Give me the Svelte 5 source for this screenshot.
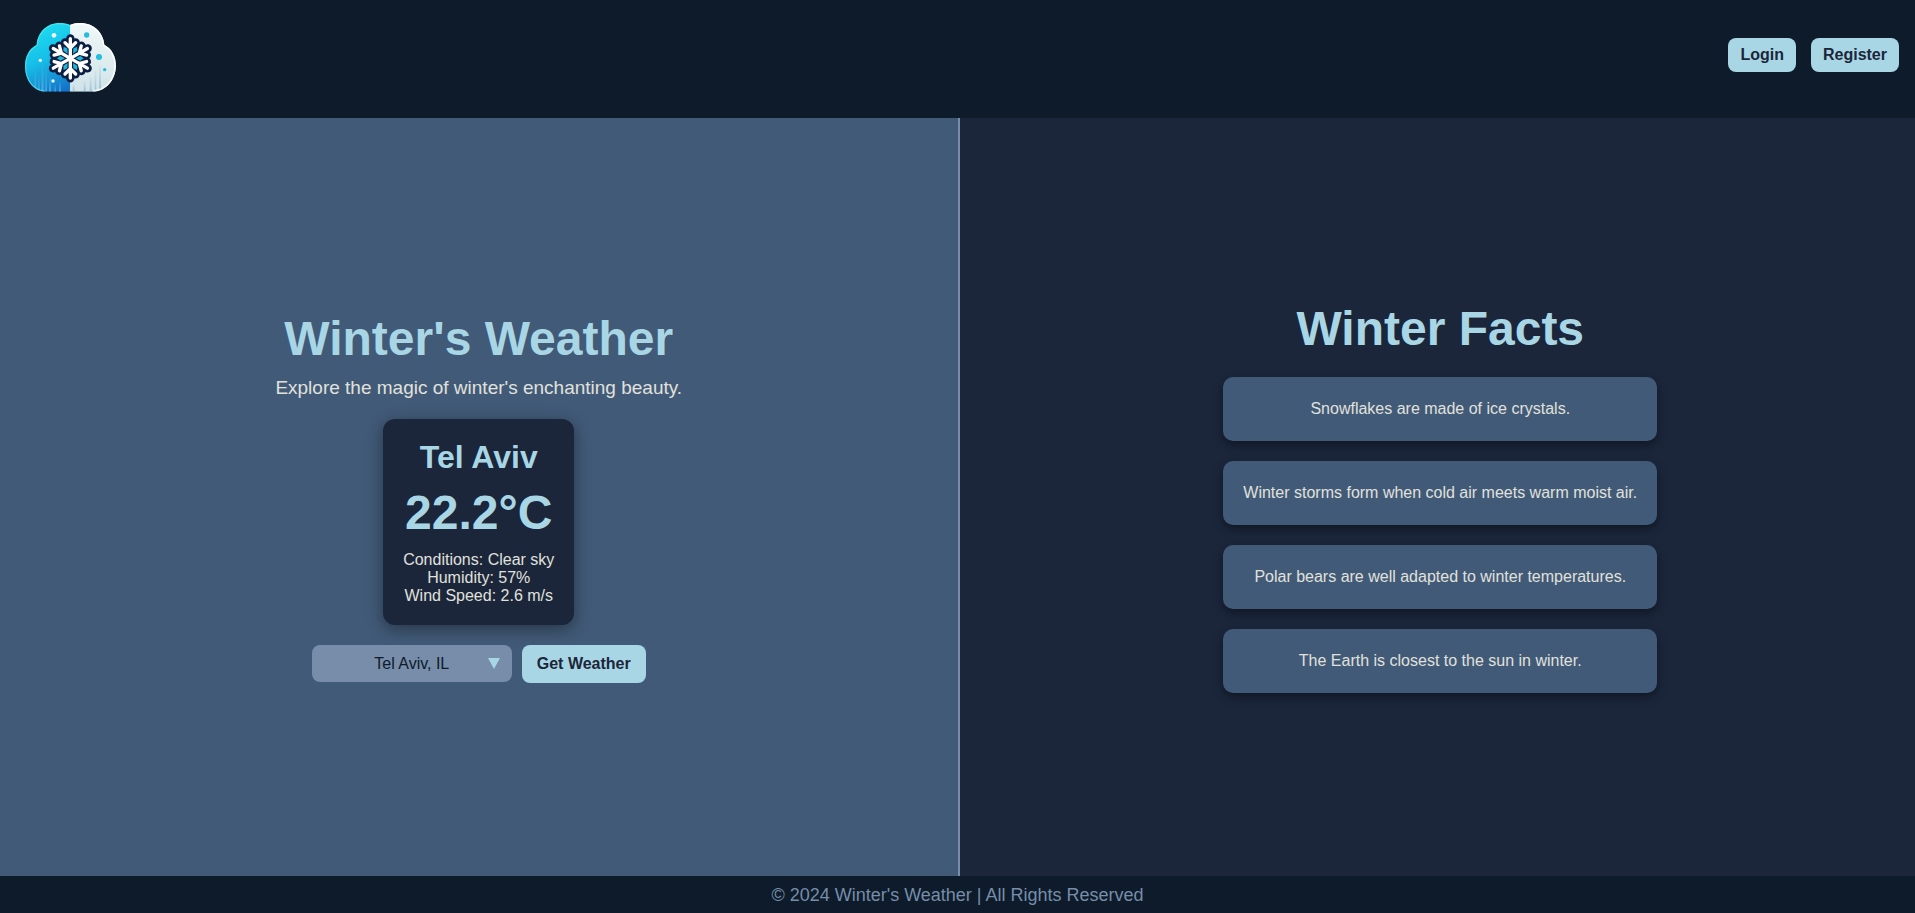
<script>
  const facts = [
    'Snowflakes are made of ice crystals.',
    'Winter storms form when cold air meets warm moist air.',
    'Polar bears are well adapted to winter temperatures.',
    'The Earth is closest to the sun in winter.'
  ];
  const cities = ['Tel Aviv, IL', 'London, GB', 'New York, US', 'Tokyo, JP'];
  const arms = [0, 60, 120, 180, 240, 300];
  let city = $state(cities[0]);
</script>

<div class="page">
  <header>
    <a class="logo" href="#home" aria-label="Home">
      <svg viewBox="30 -15 300 300" aria-hidden="true">
        <defs>
          <linearGradient id="cold" x1="0.4" y1="0" x2="0.7" y2="1">
            <stop offset="0" stop-color="#20e0f0" />
            <stop offset="0.5" stop-color="#16bfe8" />
            <stop offset="1" stop-color="#1474c8" />
          </linearGradient>
          <linearGradient id="pale" x1="0" y1="0" x2="0" y2="1">
            <stop offset="0" stop-color="#f2f8f8" />
            <stop offset="0.65" stop-color="#dcebed" />
            <stop offset="1" stop-color="#cfe2e9" />
          </linearGradient>
          <linearGradient id="drip" x1="0" y1="0" x2="0" y2="1">
            <stop offset="0" stop-color="#5cc0ec" stop-opacity="0" />
            <stop offset="1" stop-color="#6cc6ee" stop-opacity="0.6" />
          </linearGradient>
          <linearGradient id="shade" x1="0" y1="0" x2="0" y2="1">
            <stop offset="0" stop-color="#8fbdd2" stop-opacity="0.1" />
            <stop offset="1" stop-color="#7fb2cb" stop-opacity="0.7" />
          </linearGradient>
          <clipPath id="cloud">
            <path d="M105 245C70 243 45 212 45 168C45 138 58 116 80 104C83 66 112 39 148 39C160 39 171 41 180 45C190 40 202 39 212 39C249 39 280 66 283 104C305 116 318 138 318 168C316 212 288 243 250 245Z" />
          </clipPath>
        </defs>
        <g clip-path="url(#cloud)">
          <rect x="40" y="30" width="140" height="220" fill="url(#cold)" />
          <rect x="180" y="30" width="145" height="220" fill="url(#pale)" />
          <g fill="url(#drip)">
            <rect x="73" y="175" width="6" height="70" />
            <rect x="84" y="190" width="5" height="55" />
            <rect x="94" y="155" width="7" height="90" />
            <rect x="106" y="170" width="5" height="75" />
            <rect x="117" y="195" width="6" height="50" />
            <rect x="133" y="222" width="5" height="23" />
            <rect x="147" y="212" width="6" height="33" />
          </g>
          <g fill="url(#shade)">
            <rect x="188" y="222" width="6" height="23" />
            <rect x="221" y="212" width="6" height="33" />
            <rect x="239" y="200" width="6" height="45" />
            <rect x="254" y="182" width="5" height="63" />
            <rect x="267" y="165" width="6" height="80" />
          </g>
          <path d="M105 245C70 243 45 212 45 168C45 138 58 116 80 104C83 66 112 39 148 39C160 39 171 41 180 45" fill="none" stroke="#5cecf5" stroke-width="7" opacity="0.6" />
          <path d="M180 45C190 40 202 39 212 39C249 39 280 66 283 104C305 116 318 138 318 168C316 212 288 243 250 245" fill="none" stroke="#fff" stroke-width="10" opacity="0.8" />
        </g>
        <g fill="#effcff">
          <circle cx="132" cy="76" r="7" />
          <circle cx="91" cy="151" r="5" />
          <circle cx="129" cy="213" r="5" />
        </g>
        <g fill="#24bce0">
          <circle cx="230" cy="75" r="8" />
          <circle cx="267" cy="141" r="9" />
          <circle cx="284" cy="179" r="5" />
        </g>
        <g fill="none" stroke="#0d1e43" stroke-width="25" stroke-linecap="round" stroke-linejoin="round">
          {#each arms as angle}
            <path d="M181 145V85M165 97L181 113L197 97" transform="rotate({angle} 181 145)" />
          {/each}
        </g>
        <circle cx="181" cy="145" r="42" fill="#0d1e43" />
        <g fill="#22b4d6">
          {#each arms as angle}
            <path d="M181 129L188 115L181 105L174 115Z" transform="rotate({angle + 30} 181 145)" />
          {/each}
        </g>
        <g fill="none" stroke="#fff" stroke-width="10" stroke-linecap="round" stroke-linejoin="round">
          {#each arms as angle}
            <path d="M181 145V86M165 98L181 114L197 98" transform="rotate({angle} 181 145)" />
          {/each}
        </g>
      </svg>
    </a>
    <nav>
      <button type="button">Login</button>
      <button type="button">Register</button>
    </nav>
  </header>

  <main>
    <section class="weather">
      <h1>Winter's Weather</h1>
      <p class="tagline">Explore the magic of winter's enchanting beauty.</p>
      <article class="report">
        <h2>Tel Aviv</h2>
        <p class="temperature">22.2°C</p>
        <p>Conditions: Clear sky</p>
        <p>Humidity: 57%</p>
        <p>Wind Speed: 2.6 m/s</p>
      </article>
      <form onsubmit={(event) => event.preventDefault()}>
        <div class="picker">
          <select aria-label="City" bind:value={city}>
            {#each cities as name}
              <option value={name}>{name}</option>
            {/each}
          </select>
          <svg viewBox="0 0 12 11" aria-hidden="true"><path d="M0 0H12L6 11Z" /></svg>
        </div>
        <button class="submit" type="submit">Get Weather</button>
      </form>
    </section>

    <section class="facts">
      <h1>Winter Facts</h1>
      <ul>
        {#each facts as fact}
          <li>{fact}</li>
        {/each}
      </ul>
    </section>
  </main>

  <footer>© 2024 Winter's Weather | All Rights Reserved</footer>
</div>

<style>
  :global(body) {
    margin: 0;
    background: #0d1b2a;
  }

  .page {
    display: flex;
    flex-direction: column;
    min-height: 100vh;
    overflow-x: hidden;
    color: #e0e1dd;
    font-family: "Liberation Sans", Arial, sans-serif;
    font-size: 16px;
    line-height: 18px;
  }

  header {
    display: flex;
    align-items: center;
    justify-content: space-between;
    padding: 5px 16px 13px 20px;
    background: #0d1b2a;
  }

  .logo,
  .logo svg {
    display: block;
    width: 100px;
    height: 100px;
  }

  nav {
    display: flex;
    gap: 15px;
  }

  button {
    padding: 8px 12px;
    border: 0;
    border-radius: 8px;
    background: #a9d6e5;
    color: #1b263b;
    font: bold 16px/18px "Liberation Sans", Arial, sans-serif;
    cursor: pointer;
  }

  main {
    display: flex;
    flex: 1;
  }

  section {
    display: flex;
    flex: 0 0 50%;
    flex-direction: column;
    align-items: center;
    justify-content: center;
    text-align: center;
  }

  .weather {
    border-right: 2px solid #778da9;
    background: #415a77;
  }

  .facts {
    padding-left: 2px;
    background: #1b263b;
  }

  h1,
  h2,
  p,
  ul {
    margin: 0;
  }

  h1,
  h2,
  .temperature {
    color: #a9d6e5;
    font-weight: bold;
  }

  h1,
  .temperature {
    padding-bottom: 2px;
    font-size: 48px;
    line-height: 53px;
  }

  .tagline {
    margin: 10px 0 20px;
    font-size: 19px;
    line-height: 22px;
  }

  .report {
    padding: 20px;
    border-radius: 12px;
    background: #1b263b;
    box-shadow: 0 4px 16px rgba(0, 0, 0, 0.4);
  }

  h2 {
    font-size: 32px;
    line-height: 37px;
  }

  .temperature {
    margin: 10px 0;
  }

  form {
    display: flex;
    align-items: flex-start;
    gap: 10px;
    margin-top: 20px;
  }

  .picker {
    position: relative;
    width: 200px;
  }

  select {
    display: block;
    width: 100%;
    padding: 10px 12px 9px;
    border: 0;
    border-radius: 8px;
    appearance: none;
    background: #778da9;
    color: #0d1b2a;
    font: 16px/18px "Liberation Sans", Arial, sans-serif;
    text-align: center;
    text-align-last: center;
  }

  .picker svg {
    position: absolute;
    top: 13px;
    right: 12px;
    width: 12px;
    height: 11px;
    fill: #a9d6e5;
    pointer-events: none;
  }

  .submit {
    padding: 10px 15px;
  }

  ul {
    display: flex;
    flex-direction: column;
    gap: 20px;
    margin-top: 20px;
    padding: 0;
    list-style: none;
  }

  li {
    padding: 20px;
    border-radius: 10px;
    background: #415a77;
    box-shadow: 0 4px 10px rgba(0, 0, 0, 0.4);
    line-height: 24px;
  }

  footer {
    padding: 9px 8px 7px;
    background: #0d1b2a;
    color: #778da9;
    font-size: 18px;
    line-height: 21px;
    text-align: center;
  }
</style>
